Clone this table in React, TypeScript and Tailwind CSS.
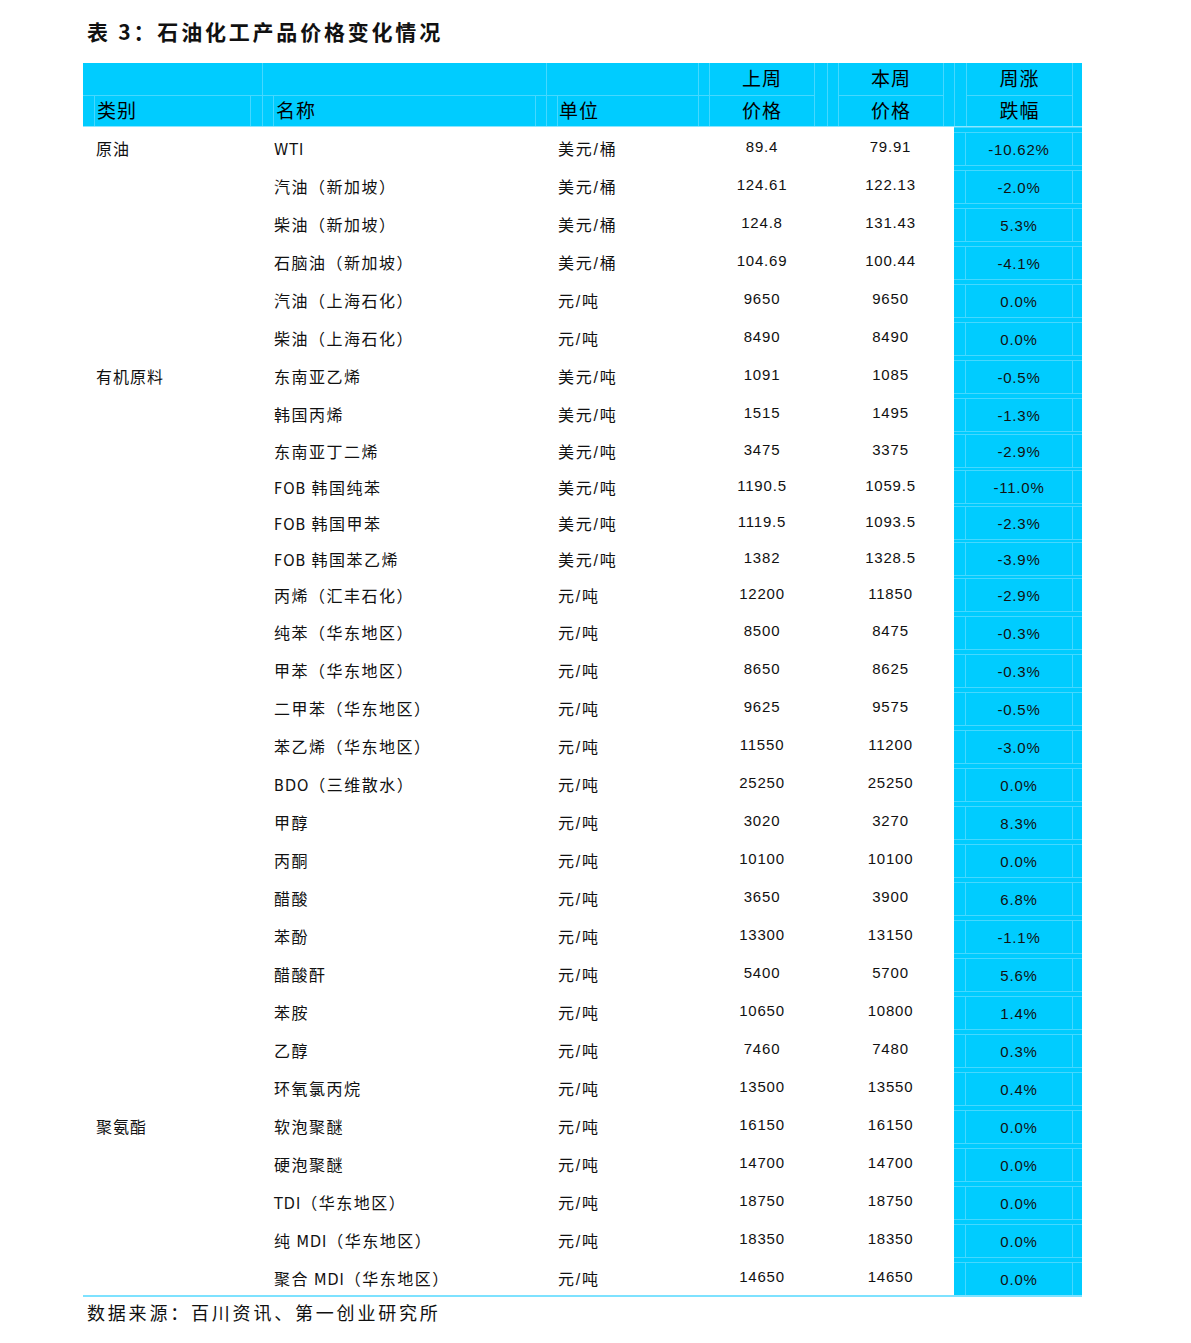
import React from 'react';

type Row = {
  cat?: string;
  name: string;
  unit: string;
  last: string;
  curr: string;
  chg: string;
  short?: boolean;
};

const rows: Row[] = [
  { cat: '原油', name: 'WTI', unit: '美元/桶', last: '89.4', curr: '79.91', chg: '-10.62%' },
  { name: '汽油（新加坡）', unit: '美元/桶', last: '124.61', curr: '122.13', chg: '-2.0%' },
  { name: '柴油（新加坡）', unit: '美元/桶', last: '124.8', curr: '131.43', chg: '5.3%' },
  { name: '石脑油（新加坡）', unit: '美元/桶', last: '104.69', curr: '100.44', chg: '-4.1%' },
  { name: '汽油（上海石化）', unit: '元/吨', last: '9650', curr: '9650', chg: '0.0%' },
  { name: '柴油（上海石化）', unit: '元/吨', last: '8490', curr: '8490', chg: '0.0%' },
  { cat: '有机原料', name: '东南亚乙烯', unit: '美元/吨', last: '1091', curr: '1085', chg: '-0.5%' },
  { name: '韩国丙烯', unit: '美元/吨', last: '1515', curr: '1495', chg: '-1.3%' },
  { name: '东南亚丁二烯', unit: '美元/吨', last: '3475', curr: '3375', chg: '-2.9%', short: true },
  { name: 'FOB 韩国纯苯', unit: '美元/吨', last: '1190.5', curr: '1059.5', chg: '-11.0%', short: true },
  { name: 'FOB 韩国甲苯', unit: '美元/吨', last: '1119.5', curr: '1093.5', chg: '-2.3%', short: true },
  { name: 'FOB 韩国苯乙烯', unit: '美元/吨', last: '1382', curr: '1328.5', chg: '-3.9%', short: true },
  { name: '丙烯（汇丰石化）', unit: '元/吨', last: '12200', curr: '11850', chg: '-2.9%', short: true },
  { name: '纯苯（华东地区）', unit: '元/吨', last: '8500', curr: '8475', chg: '-0.3%' },
  { name: '甲苯（华东地区）', unit: '元/吨', last: '8650', curr: '8625', chg: '-0.3%' },
  { name: '二甲苯（华东地区）', unit: '元/吨', last: '9625', curr: '9575', chg: '-0.5%' },
  { name: '苯乙烯（华东地区）', unit: '元/吨', last: '11550', curr: '11200', chg: '-3.0%' },
  { name: 'BDO（三维散水）', unit: '元/吨', last: '25250', curr: '25250', chg: '0.0%' },
  { name: '甲醇', unit: '元/吨', last: '3020', curr: '3270', chg: '8.3%' },
  { name: '丙酮', unit: '元/吨', last: '10100', curr: '10100', chg: '0.0%' },
  { name: '醋酸', unit: '元/吨', last: '3650', curr: '3900', chg: '6.8%' },
  { name: '苯酚', unit: '元/吨', last: '13300', curr: '13150', chg: '-1.1%' },
  { name: '醋酸酐', unit: '元/吨', last: '5400', curr: '5700', chg: '5.6%' },
  { name: '苯胺', unit: '元/吨', last: '10650', curr: '10800', chg: '1.4%' },
  { name: '乙醇', unit: '元/吨', last: '7460', curr: '7480', chg: '0.3%' },
  { name: '环氧氯丙烷', unit: '元/吨', last: '13500', curr: '13550', chg: '0.4%' },
  { cat: '聚氨酯', name: '软泡聚醚', unit: '元/吨', last: '16150', curr: '16150', chg: '0.0%' },
  { name: '硬泡聚醚', unit: '元/吨', last: '14700', curr: '14700', chg: '0.0%' },
  { name: 'TDI（华东地区）', unit: '元/吨', last: '18750', curr: '18750', chg: '0.0%' },
  { name: '纯 MDI（华东地区）', unit: '元/吨', last: '18350', curr: '18350', chg: '0.0%' },
  { name: '聚合 MDI（华东地区）', unit: '元/吨', last: '14650', curr: '14650', chg: '0.0%' },
];

const cols = 'grid grid-cols-[179px_284px_163px_106px_12px_127px_128px]';
const cjk = "font-['Liberation_Sans','Noto_Sans_CJK_SC',sans-serif]";

// latin runs (WTI, FOB, MDI...) are set in a narrow face; spaces round them become margins
function NameText({ text }: { text: string }) {
  const parts = text.split(/( ?[A-Z]+ ?)/).filter(Boolean);
  return (
    <>
      {parts.map((p, i) => {
        const word = p.trim();
        if (/^[A-Z]+$/.test(word)) {
          const ml = p.startsWith(' ') ? 'ml-[5px]' : '';
          const mr = p.endsWith(' ') ? 'mr-[5px]' : '';
          return (
            <span
              key={i}
              className={`${ml} ${mr} tracking-[1px] font-['Liberation_Sans_Narrow','DejaVu_Sans_Condensed','Liberation_Sans',sans-serif]`}
            >
              {word}
            </span>
          );
        }
        return <span key={i}>{p}</span>;
      })}
    </>
  );
}

function HeadText({ children }: { children?: React.ReactNode }) {
  return <span className="text-[19px] tracking-[1px] leading-none text-black">{children}</span>;
}

function Header() {
  return (
    <div className={`${cols} h-[64px] bg-[#00ccff] border-b border-[#8be6ff] ${cjk}`}>
      {/* 类别 */}
      <div className="flex flex-col">
        <div className="h-[32px]" />
        <div className="flex-1 border-t border-[#45d8ff]">
          <div className="h-full ml-[11px] mr-[11px] border-x border-[#45d8ff] flex items-center pl-[2px]">
            <HeadText>类别</HeadText>
          </div>
        </div>
      </div>
      {/* 名称 */}
      <div className="flex flex-col border-l border-[#45d8ff]">
        <div className="h-[32px]" />
        <div className="flex-1 border-t border-[#45d8ff]">
          <div className="h-full ml-[10px] mr-[10px] border-x border-[#45d8ff] flex items-center pl-[2px]">
            <HeadText>名称</HeadText>
          </div>
        </div>
      </div>
      {/* 单位 */}
      <div className="flex flex-col border-l border-[#45d8ff]">
        <div className="h-[32px] mr-[10px] border-r border-[#45d8ff]" />
        <div className="flex-1 border-t border-[#45d8ff]">
          <div className="h-full ml-[10px] mr-[10px] border-x border-[#45d8ff] flex items-center pl-[1px]">
            <HeadText>单位</HeadText>
          </div>
        </div>
      </div>
      {/* 上周价格 */}
      <div className="flex flex-col border-x border-[#45d8ff]">
        <div className="h-[32px] flex items-center justify-center pt-[1px]">
          <HeadText>上周</HeadText>
        </div>
        <div className="flex-1 border-t border-[#45d8ff] flex items-center justify-center">
          <HeadText>价格</HeadText>
        </div>
      </div>
      <div />
      {/* 本周价格 */}
      <div className="flex border-l border-[#45d8ff]">
        <div className="flex-1 ml-[10px] mr-[10px] border-x border-[#45d8ff] flex flex-col">
          <div className="h-[32px] flex items-center justify-center pt-[1px]">
            <HeadText>本周</HeadText>
          </div>
          <div className="flex-1 border-t border-[#45d8ff] flex items-center justify-center">
            <HeadText>价格</HeadText>
          </div>
        </div>
      </div>
      {/* 周涨跌幅 */}
      <div className="flex border-l border-[#45d8ff]">
        <div className="flex-1 ml-[11px] mr-[9px] border-x border-[#45d8ff] flex flex-col">
          <div className="h-[32px] flex items-center justify-center pt-[1px]">
            <HeadText>周涨</HeadText>
          </div>
          <div className="flex-1 border-t border-[#45d8ff] flex items-center justify-center">
            <HeadText>跌幅</HeadText>
          </div>
        </div>
      </div>
    </div>
  );
}

function BodyRow({ row }: { row: Row }) {
  return (
    <div className={`${cols} ${row.short ? 'h-[36px]' : 'h-[38px]'} ${cjk} text-[#111]`}>
      <div className="flex items-center pl-[13px] pt-[8px] text-[16px] tracking-[1px] leading-none">
        {row.cat}
      </div>
      <div className="flex items-center pl-[12px] pt-[8px] text-[16px] tracking-[1.5px] leading-none whitespace-nowrap">
        <NameText text={row.name} />
      </div>
      <div className="flex items-center pl-[12px] pt-[8px] text-[16px] tracking-[1.8px] leading-none whitespace-nowrap">
        {row.unit}
      </div>
      <div className="flex items-center justify-center text-[15px] tracking-[0.8px] leading-none">
        {row.last}
      </div>
      <div />
      <div className="flex items-center justify-center text-[15px] tracking-[0.8px] leading-none">
        {row.curr}
      </div>
      <div className="flex flex-col bg-[#00ccff] border-t border-[#45d8ff]">
        <div className={`${row.short ? 'h-[3px]' : 'h-[5px]'} border-b border-[#45d8ff]`} />
        <div className="flex-1 ml-[11px] mr-[9px] border-x border-[#45d8ff] flex items-center justify-center text-[15px] tracking-[0.8px] leading-none">
          {row.chg}
        </div>
      </div>
    </div>
  );
}

export default function App() {
  return (
    <div className="w-[1191px] min-h-[1343px] bg-white pl-[83px] pt-[20px]">
      <h1 className="pl-[4px] h-[24px] flex items-center text-[21px] font-bold tracking-[2.8px] text-[#111] font-['Noto_Sans_CJK_SC',sans-serif] whitespace-nowrap">
        表 3：石油化工产品价格变化情况
      </h1>
      <div className="mt-[19px] w-[999px]">
        <Header />
        {rows.map((r, i) => (
          <BodyRow key={i} row={r} />
        ))}
        <div className="h-[2px] bg-[#7ee2ff]" />
      </div>
      <p className="mt-[5px] pl-[4px] text-[18px] leading-[20px] tracking-[2.8px] text-[#111] font-['Noto_Sans_CJK_SC',sans-serif] whitespace-nowrap">
        数据来源：百川资讯、第一创业研究所
      </p>
    </div>
  );
}
